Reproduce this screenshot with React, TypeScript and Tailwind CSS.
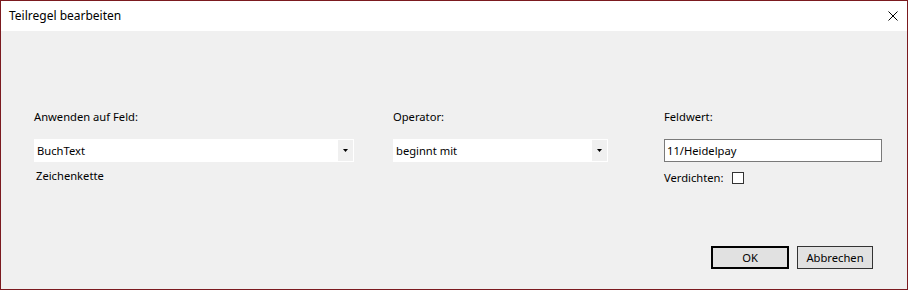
import React from "react";

const Arrow = () => (
    <svg width="5" height="3" viewBox="0 0 5 3" className="block">
        <polygon points="0,0 5,0 2.5,3" fill="#000" />
    </svg>
);

interface ComboProps {
    value: string;
    width: string;
}

const Combo: React.FC<ComboProps> = ({ value, width }) => (
    <div className={`${width} h-[23px] bg-white flex items-stretch`}>
        <div className="flex-1 flex items-center pl-[3px] text-black">{value}</div>
        <div className="w-[15px] my-[1px] mr-[1px] bg-[#f0f0f0] flex items-center justify-center">
            <Arrow />
        </div>
    </div>
);

export default function App() {
    return (
        <div
            className="w-[908px] h-[290px] border border-[#7b1a1f] bg-[#f0f0f0] flex flex-col text-[11.2px] leading-[16px] text-black"
            style={{ fontFamily: '"Noto Sans", "Segoe UI", sans-serif' }}
        >
            {/* title bar */}
            <div className="h-[30px] bg-white flex items-center justify-between pl-[8px] pr-[9px] text-[12px]">
                <span>Teilregel bearbeiten</span>
                <svg width="10" height="10" viewBox="0 0 10 10" className="mb-[1px]">
                    <path d="M0.5 0.5 L9.5 9.5 M9.5 0.5 L0.5 9.5" stroke="#000" strokeWidth="1" />
                </svg>
            </div>

            <div className="flex-1 flex flex-col pt-[78px] pl-[33px] pr-[34px] pb-[20px]">
                <div className="flex items-start">
                    <div className="w-[320px] shrink-0 flex flex-col">
                        <div className="h-[16px]">Anwenden auf Feld:</div>
                        <div className="mt-[14px]">
                            <Combo value="BuchText" width="w-[320px]" />
                        </div>
                        <div className="mt-[6px] pl-[2px]">Zeichenkette</div>
                    </div>

                    <div className="w-[215px] shrink-0 ml-[39px] flex flex-col">
                        <div className="h-[16px]">Operator:</div>
                        <div className="mt-[14px]">
                            <Combo value="beginnt mit" width="w-[215px]" />
                        </div>
                    </div>

                    <div className="w-[218px] shrink-0 ml-[56px] flex flex-col">
                        <div className="h-[16px]">Feldwert:</div>
                        <div className="mt-[14px] h-[23px] bg-white border border-[#7a7a7a] flex items-center pl-[2px]">
                            11/Heidelpay
                        </div>
                        <div className="mt-[8px] flex items-center">
                            <span>Verdichten:</span>
                            <div className="ml-[8px] w-[12px] h-[12px] border border-[#333333] bg-white" />
                        </div>
                    </div>
                </div>

                <div className="mt-auto flex justify-end gap-[8px]">
                    <button className="w-[78px] h-[23px] border-2 border-black bg-[#e1e1e1] flex items-center justify-center">
                        OK
                    </button>
                    <button className="w-[76px] h-[23px] border border-[#333333] bg-[#e1e1e1] flex items-center justify-center">
                        Abbrechen
                    </button>
                </div>
            </div>
        </div>
    );
}
